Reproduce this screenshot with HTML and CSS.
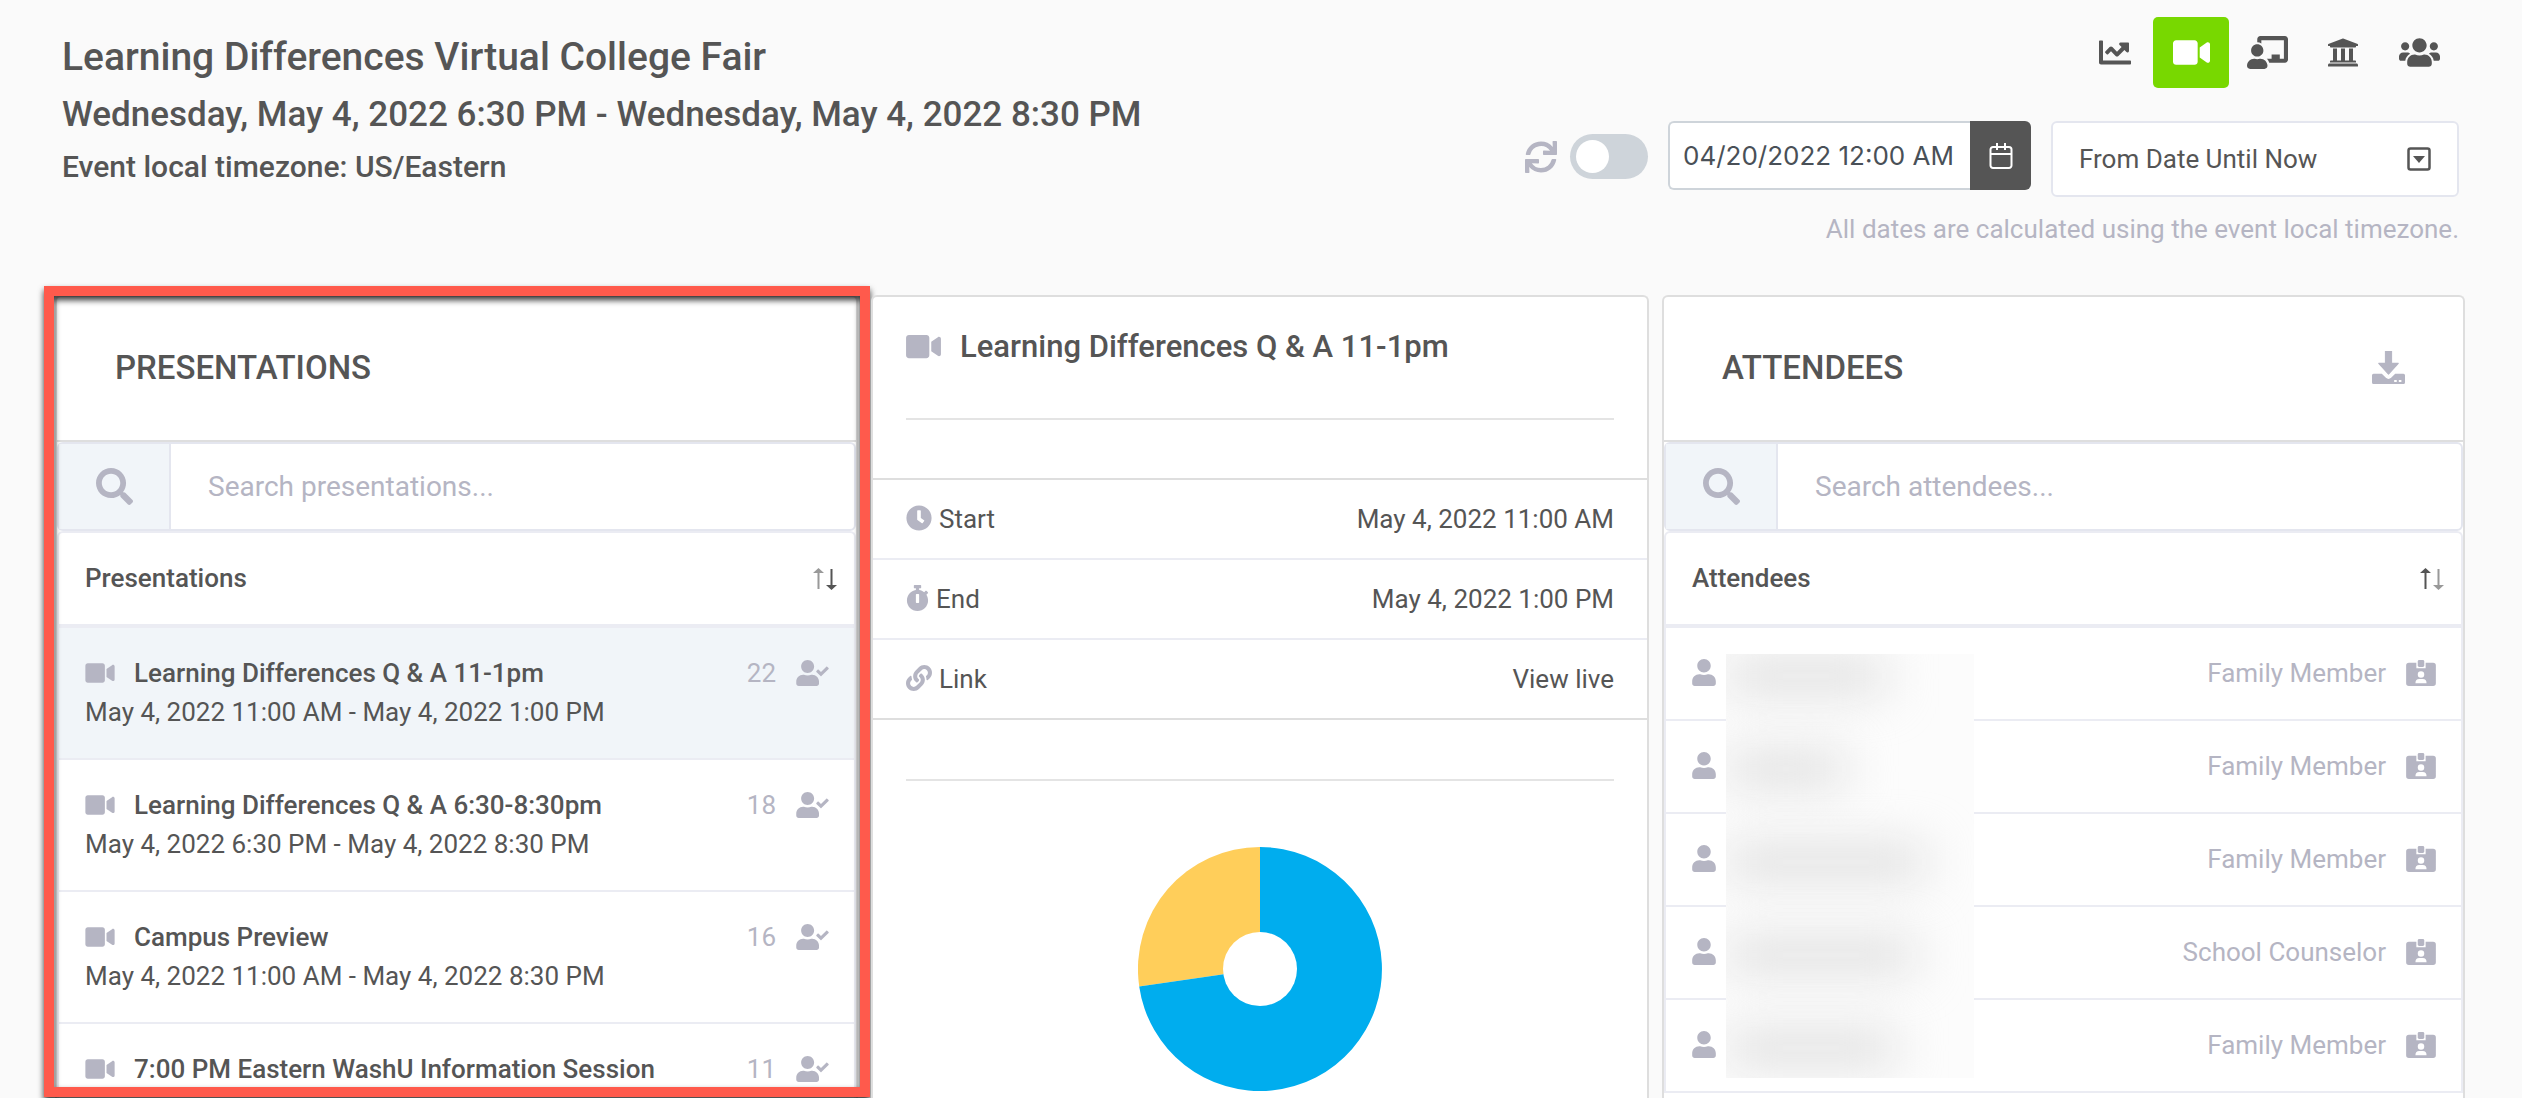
FILE: index.html
```html
<!DOCTYPE html>
<html lang="en">
<head>
    <meta charset="utf-8">
    <title>Learning Differences Virtual College Fair</title>
    <link rel="stylesheet" href="styles.css">
</head>
<body>
    <!-- icon sprites -->
    <svg class="sprites" width="0" height="0">
        <symbol id="i-chart" viewBox="0 0 512 512"><path d="M496 384H64V80c0-8.840-7.160-16-16-16H16C7.160 64 0 71.160 0 80v336c0 17.670 14.330 32 32 32h464c8.840 0 16-7.160 16-16v-32c0-8.840-7.160-16-16-16zM464 96H345.940c-21.380 0-32.090 25.850-16.970 40.970l32.400 32.400L288 242.750l-73.370-73.370c-12.500-12.500-32.760-12.500-45.250 0l-68.690 68.690c-6.250 6.250-6.250 16.380 0 22.630l22.620 22.620c6.250 6.250 16.380 6.250 22.630 0L192 237.250l73.370 73.370c12.500 12.500 32.760 12.500 45.250 0l96-96 32.400 32.400c15.120 15.120 40.970 4.410 40.970-16.970V112c.010-8.840-7.150-16-15.990-16z"/></symbol>
        <symbol id="i-video" viewBox="0 0 576 512"><path d="M336.200 64H47.800C21.400 64 0 85.400 0 111.800v288.400C0 426.600 21.400 448 47.800 448h288.400c26.400 0 47.800-21.400 47.800-47.800V111.800c0-26.400-21.400-47.800-47.800-47.800zm189.400 37.700L416 177.300v157.400l109.600 75.500c21.200 14.600 50.400-.3 50.400-25.800V127.500c0-25.400-29.100-40.400-50.400-25.800z"/></symbol>
        <symbol id="i-teacher" viewBox="0 0 640 512"><path d="M208 352c-2.390 0-4.780.350-7.060 1.090C187.980 357.300 174.350 360 160 360c-14.350 0-27.980-2.700-40.950-6.910-2.280-.740-4.660-1.090-7.050-1.090C49.940 352-.330 402.480 0 464.620.140 490.880 21.730 512 48 512h224c26.270 0 47.860-21.120 48-47.380.330-62.140-49.940-112.620-112-112.620zm-48-32c53.020 0 96-42.980 96-96s-42.980-96-96-96-96 42.980-96 96 42.980 96 96 96zM592 0H208c-26.470 0-48 22.250-48 49.590V96c23.420 0 45.100 6.780 64 17.800V64h352v288h-64v-64H384v64h-76.240c19.100 16.690 33.120 38.730 39.690 64H592c26.470 0 48-22.250 48-49.590V49.590C640 22.250 618.470 0 592 0z"/></symbol>
        <symbol id="i-bank" viewBox="0 0 512 512"><path d="M496 128v16a8 8 0 0 1-8 8h-24v12c0 6.627-5.373 12-12 12H60c-6.627 0-12-5.373-12-12v-12H24a8 8 0 0 1-8-8v-16a8 8 0 0 1 4.941-7.392l232-88a7.996 7.996 0 0 1 6.118 0l232 88A8 8 0 0 1 496 128zm-24 304H40c-13.255 0-24 10.745-24 24v16a8 8 0 0 0 8 8h464a8 8 0 0 0 8-8v-16c0-13.255-10.745-24-24-24zM96 192v192H60c-6.627 0-12 5.373-12 12v20h416v-20c0-6.627-5.373-12-12-12h-36V192h-64v192h-64V192h-64v192h-64V192H96z"/></symbol>
        <symbol id="i-users" viewBox="0 0 640 512"><path d="M96 224c35.300 0 64-28.700 64-64s-28.700-64-64-64-64 28.700-64 64 28.700 64 64 64zm448 0c35.300 0 64-28.700 64-64s-28.700-64-64-64-64 28.700-64 64 28.700 64 64 64zm32 32h-64c-17.600 0-33.500 7.100-45.100 18.600 40.300 22.100 68.900 62 75.100 109.400h66c17.700 0 32-14.300 32-32v-32c0-35.300-28.700-64-64-64zm-256 0c61.900 0 112-50.100 112-112S381.900 32 320 32 208 82.100 208 144s50.100 112 112 112zm76.800 32h-8.300c-20.800 10-43.900 16-68.500 16s-47.600-6-68.500-16h-8.300C179.600 288 128 339.600 128 403.200V432c0 26.500 21.500 48 48 48h288c26.500 0 48-21.500 48-48v-28.800c0-63.600-51.600-115.200-115.200-115.200zm-223.700-13.400C161.500 263.100 145.600 256 128 256H64c-35.300 0-64 28.700-64 64v32c0 17.700 14.300 32 32 32h65.900c6.300-47.400 34.900-87.300 75.200-109.400z"/></symbol>
        <symbol id="i-sync" viewBox="0 0 512 512"><path d="M440.650 12.570l4 82.770A247.160 247.160 0 0 0 255.830 8C134.730 8 33.910 94.920 12.290 209.820A12 12 0 0 0 24.090 224h49.050a12 12 0 0 0 11.670-9.260 175.910 175.910 0 0 1 317-56.940l-101.460-4.860a12 12 0 0 0-12.570 12v47.410a12 12 0 0 0 12 12H500a12 12 0 0 0 12-12V12a12 12 0 0 0-12-12h-47.370a12 12 0 0 0-11.980 12.570zM255.830 432a175.610 175.610 0 0 1-146-77.800l101.800 4.870a12 12 0 0 0 12.570-12v-47.400a12 12 0 0 0-12-12H12a12 12 0 0 0-12 12V500a12 12 0 0 0 12 12h47.350a12 12 0 0 0 12-12.600l-4.150-82.570A247.170 247.170 0 0 0 255.830 504c121.110 0 221.930-86.920 243.550-201.820a12 12 0 0 0-11.800-14.180h-49.050a12 12 0 0 0-11.670 9.260A175.860 175.860 0 0 1 255.830 432z"/></symbol>
        <symbol id="i-search" viewBox="0 0 512 512"><path d="M505 442.700L405.300 343c-4.500-4.500-10.600-7-17-7H372c27.600-35.300 44-79.700 44-128C416 93.100 322.900 0 208 0S0 93.100 0 208s93.100 208 208 208c48.300 0 92.700-16.400 128-44v16.300c0 6.400 2.500 12.500 7 17l99.700 99.700c9.400 9.400 24.600 9.400 33.900 0l28.300-28.300c9.400-9.400 9.400-24.600.1-34zM208 336c-70.700 0-128-57.200-128-128 0-70.700 57.200-128 128-128 70.700 0 128 57.200 128 128 0 70.700-57.200 128-128 128z"/></symbol>
        <symbol id="i-user" viewBox="0 0 448 512"><path d="M224 256c70.700 0 128-57.300 128-128S294.700 0 224 0 96 57.300 96 128s57.300 128 128 128zm89.600 32h-16.700c-22.200 10.200-46.900 16-72.900 16s-50.600-5.800-72.900-16h-16.700C60.200 288 0 348.200 0 422.400V464c0 26.500 21.500 48 48 48h352c26.500 0 48-21.500 48-48v-41.600c0-74.200-60.200-134.400-134.400-134.400z"/></symbol>
        <symbol id="i-user-check" viewBox="0 0 640 512"><path d="M224 256c70.700 0 128-57.300 128-128S294.700 0 224 0 96 57.300 96 128s57.300 128 128 128zm89.600 32h-16.700c-22.200 10.200-46.900 16-72.900 16s-50.600-5.800-72.900-16h-16.700C60.200 288 0 348.200 0 422.400V464c0 26.500 21.500 48 48 48h352c26.500 0 48-21.500 48-48v-41.600c0-74.200-60.200-134.400-134.400-134.400zm323-128.400l-27.800-28.100c-4.600-4.700-12.100-4.700-16.800-.1l-104.800 104-45.500-45.800c-4.600-4.700-12.100-4.700-16.800-.1l-28.100 27.900c-4.700 4.600-4.700 12.100-.1 16.800l81.700 82.300c4.600 4.700 12.100 4.700 16.800.1l141.300-140.200c4.600-4.700 4.700-12.200.1-16.800z"/></symbol>
        <symbol id="i-clock" viewBox="0 0 512 512"><path d="M256 8C119 8 8 119 8 256s111 248 248 248 248-111 248-248S393 8 256 8zm57.100 350.100L224.900 294c-3.100-2.300-4.900-5.900-4.900-9.700V116c0-6.600 5.400-12 12-12h48c6.600 0 12 5.400 12 12v137.700l63.500 46.200c5.400 3.900 6.500 11.400 2.600 16.800l-28.200 38.800c-3.900 5.300-11.400 6.500-16.800 2.600z"/></symbol>
        <symbol id="i-stopwatch" viewBox="0 0 448 512"><path d="M432 304c0 114.900-93.100 208-208 208S16 418.900 16 304c0-104 76.300-190.200 176-205.500V64h-28c-6.600 0-12-5.400-12-12V12c0-6.600 5.400-12 12-12h120c6.600 0 12 5.400 12 12v40c0 6.600-5.400 12-12 12h-28v34.500c37.500 5.800 71.700 21.600 99.700 44.600l27.500-27.500c4.700-4.700 12.300-4.700 17 0l28.300 28.300c4.700 4.700 4.700 12.300 0 17l-29.400 29.400-.6.600C419.700 223.300 432 262.200 432 304zm-176 36V188.500c0-6.600-5.400-12-12-12h-40c-6.600 0-12 5.400-12 12V340c0 6.600 5.400 12 12 12h40c6.600 0 12-5.400 12-12z"/></symbol>
        <symbol id="i-link" viewBox="0 0 512 512"><path d="M326.612 185.391c59.747 59.809 58.927 155.698.360 214.590-.110.120-.240.250-.360.370l-67.200 67.200c-59.270 59.270-155.699 59.262-214.960 0-59.270-59.260-59.270-155.700 0-214.960l37.106-37.106c9.840-9.840 26.786-3.300 27.294 10.606.648 17.722 3.826 35.527 9.690 52.721 1.986 5.822.567 12.262-3.783 16.612l-13.087 13.087c-28.026 28.026-28.905 73.660-1.155 101.960 28.024 28.579 74.086 28.749 102.325.510l67.200-67.190c28.191-28.191 28.073-73.757 0-101.830-3.701-3.694-7.429-6.564-10.341-8.569a16.037 16.037 0 0 1-6.947-12.606c-.396-10.567 3.348-21.456 11.698-29.806l21.054-21.055c5.521-5.521 14.182-6.199 20.584-1.731a152.482 152.482 0 0 1 20.522 17.197zM467.547 44.449c-59.261-59.262-155.690-59.270-214.960 0l-67.200 67.200c-.120.120-.250.250-.360.370-58.566 58.892-59.387 154.781.360 214.590a152.454 152.454 0 0 0 20.521 17.196c6.402 4.468 15.064 3.789 20.584-1.731l21.054-21.055c8.350-8.350 12.094-19.239 11.698-29.806a16.037 16.037 0 0 0-6.947-12.606c-2.912-2.005-6.640-4.875-10.341-8.569-28.073-28.073-28.191-73.639 0-101.830l67.200-67.190c28.239-28.239 74.300-28.069 102.325.510 27.750 28.300 26.872 73.934-1.155 101.960l-13.087 13.087c-4.350 4.350-5.769 10.790-3.783 16.612 5.864 17.194 9.042 34.999 9.690 52.721.509 13.906 17.454 20.446 27.294 10.606l37.106-37.106c59.271-59.259 59.271-155.699.001-214.959z"/></symbol>
        <symbol id="i-download" viewBox="0 0 32 32"><path d="M13 0h6v12h6.500L16 22.500 6.500 12H13z" stroke="currentColor" stroke-linejoin="round"/><path d="M1.500 22h8l4 4c1.500 1.400 3.500 1.400 5 0l4-4h8a1.500 1.500 0 0 1 1.500 1.500v7a1.500 1.500 0 0 1-1.500 1.500h-29A1.500 1.500 0 0 1 0 30.500v-7A1.500 1.500 0 0 1 1.500 22z"/><path d="M21.500 28h2.500v2h-2.500zm4.500 0h2.500v2H26z" fill="#fff"/></symbol>
        <symbol id="i-badge" viewBox="0 0 32 28"><path fill-rule="evenodd" d="M3 3h8v6h10V3h8a3 3 0 0 1 3 3v19a3 3 0 0 1-3 3H3a3 3 0 0 1-3-3V6a3 3 0 0 1 3-3zm13 9a3.500 3.500 0 1 0 0 7 3.500 3.500 0 0 0 0-7zm-6 13h12c0-3-1.500-4.500-4-4.500h-4c-2.500 0-4 1.500-4 4.500z"/><rect x="12.500" width="7" height="7.500" rx="1.500"/></symbol>
        <symbol id="i-calendar" viewBox="0 0 24 28"><path d="M4 5h16a2.500 2.500 0 0 1 2.500 2.500v16A2.500 2.500 0 0 1 20 26H4a2.500 2.500 0 0 1-2.500-2.500v-16A2.500 2.500 0 0 1 4 5zM2 12h20M8 1v7M16 1v7" fill="none" stroke="currentColor" stroke-width="2"/></symbol>
        <symbol id="i-sort" viewBox="0 0 24 22"><path class="up" d="M4.500 21V5H0L5.500 0 11 5H6.500v16z"/><path class="down" d="M17.500 1v16H13l5.500 5 5.500-5h-4.500V1z"/></symbol>
    </svg>

    <header class="top">
        <div class="event">
            <h1>Learning Differences Virtual College Fair</h1>
            <h2>Wednesday, May 4, 2022 6:30 PM - Wednesday, May 4, 2022 8:30 PM</h2>
            <h3>Event local timezone: US/Eastern</h3>
        </div>
        <div class="tools">
            <nav class="tabs">
                <button aria-label="Statistics"><svg class="w32"><use href="#i-chart"/></svg></button>
                <button class="active" aria-label="Presentations"><svg class="w37"><use href="#i-video"/></svg></button>
                <button aria-label="Booths"><svg class="w41"><use href="#i-teacher"/></svg></button>
                <button aria-label="Colleges"><svg class="w32"><use href="#i-bank"/></svg></button>
                <button aria-label="Attendees"><svg class="w41"><use href="#i-users"/></svg></button>
            </nav>
            <div class="filters">
                <div class="refresh">
                    <svg class="sync"><use href="#i-sync"/></svg>
                    <input type="checkbox" class="switch" aria-label="Auto refresh">
                </div>
                <div class="date">
                    <input type="text" value="04/20/2022 12:00 AM" aria-label="From date">
                    <button aria-label="Open calendar"><svg><use href="#i-calendar"/></svg></button>
                </div>
                <select class="range" aria-label="Date range">
                    <option>From Date Until Now</option>
                </select>
            </div>
            <p class="hint">All dates are calculated using the event local timezone.</p>
        </div>
    </header>

    <main class="columns">
        <section class="card">
            <div class="card-head">
                <h4>PRESENTATIONS</h4>
            </div>
            <div class="search">
                <span class="search-icon"><svg><use href="#i-search"/></svg></span>
                <input type="text" placeholder="Search presentations..." aria-label="Search presentations">
            </div>
            <div class="rows">
                <table class="list">
                    <thead>
                        <tr><th>Presentations</th><th class="sort desc"><button aria-label="Sort"><svg><use href="#i-sort"/></svg></button></th></tr>
                    </thead>
                    <tbody>
                        <tr class="selected">
                            <td><div class="name"><svg><use href="#i-video"/></svg>Learning Differences Q &amp; A 11-1pm</div>May 4, 2022 11:00 AM - May 4, 2022 1:00 PM</td>
                            <td class="count"><div>22<svg><use href="#i-user-check"/></svg></div></td>
                        </tr>
                        <tr>
                            <td><div class="name"><svg><use href="#i-video"/></svg>Learning Differences Q &amp; A 6:30-8:30pm</div>May 4, 2022 6:30 PM - May 4, 2022 8:30 PM</td>
                            <td class="count"><div>18<svg><use href="#i-user-check"/></svg></div></td>
                        </tr>
                        <tr>
                            <td><div class="name"><svg><use href="#i-video"/></svg>Campus Preview</div>May 4, 2022 11:00 AM - May 4, 2022 8:30 PM</td>
                            <td class="count"><div>16<svg><use href="#i-user-check"/></svg></div></td>
                        </tr>
                        <tr>
                            <td><div class="name"><svg><use href="#i-video"/></svg>7:00 PM Eastern WashU Information Session</div></td>
                            <td class="count"><div>11<svg><use href="#i-user-check"/></svg></div></td>
                        </tr>
                    </tbody>
                </table>
            </div>
            <div class="highlight"></div>
        </section>

        <section class="card">
            <div class="detail-head">
                <h5><svg><use href="#i-video"/></svg>Learning Differences Q &amp; A 11-1pm</h5>
                <hr>
            </div>
            <dl class="facts">
                <div><dt><svg><use href="#i-clock"/></svg>Start</dt><dd>May 4, 2022 11:00 AM</dd></div>
                <div><dt><svg class="narrow"><use href="#i-stopwatch"/></svg>End</dt><dd>May 4, 2022 1:00 PM</dd></div>
                <div><dt><svg><use href="#i-link"/></svg>Link</dt><dd><a href="#">View live</a></dd></div>
            </dl>
            <div class="chart">
                <hr>
                <svg class="donut" viewBox="-122 -122 244 244">
                    <path fill="#ffce5a" d="M0 0V-122A122 122 0 0 0 -120.800 17.400z"/>
                    <path fill="#00adee" d="M0 0V-122A122 122 0 1 1 -120.800 17.400z"/>
                    <circle r="37" fill="#fff"/>
                </svg>
            </div>
        </section>

        <section class="card">
            <div class="card-head">
                <h4>ATTENDEES</h4>
                <button aria-label="Download attendees"><svg><use href="#i-download"/></svg></button>
            </div>
            <div class="search">
                <span class="search-icon"><svg><use href="#i-search"/></svg></span>
                <input type="text" placeholder="Search attendees..." aria-label="Search attendees">
            </div>
            <div class="rows people">
                <table class="list">
                    <thead>
                        <tr><th>Attendees</th><th class="sort asc"><button aria-label="Sort"><svg><use href="#i-sort"/></svg></button></th></tr>
                    </thead>
                    <tbody>
                        <tr><td><svg class="person"><use href="#i-user"/></svg></td><td class="role"><div>Family Member<svg><use href="#i-badge"/></svg></div></td></tr>
                        <tr><td><svg class="person"><use href="#i-user"/></svg></td><td class="role"><div>Family Member<svg><use href="#i-badge"/></svg></div></td></tr>
                        <tr><td><svg class="person"><use href="#i-user"/></svg></td><td class="role"><div>Family Member<svg><use href="#i-badge"/></svg></div></td></tr>
                        <tr><td><svg class="person"><use href="#i-user"/></svg></td><td class="role"><div>School Counselor<svg><use href="#i-badge"/></svg></div></td></tr>
                        <tr><td><svg class="person"><use href="#i-user"/></svg></td><td class="role"><div>Family Member<svg><use href="#i-badge"/></svg></div></td></tr>
                    </tbody>
                </table>
                <!-- names are hidden -->
                <div class="redacted">
                    <span style="width: 160px"></span>
                    <span style="width: 120px"></span>
                    <span style="width: 200px"></span>
                    <span style="width: 190px"></span>
                    <span style="width: 170px"></span>
                </div>
            </div>
        </section>
    </main>
</body>
</html>
```
FILE: styles.css
```css
* {
    box-sizing: border-box;
}
body {
    margin: 0;
    height: 100vh;
    overflow: hidden;
    display: flex;
    flex-direction: column;
    background: #fafafa;
    color: #555;
    font-family: Roboto, "Liberation Sans", sans-serif;
    font-size: 26px;
    line-height: 39px;
}
h1, h2, h3, h4, h5, p, dl, dd {
    margin: 0;
}
h1, h2, h3, h4, h5 {
    font-weight: 500;
}
button, input, select {
    font: inherit;
    color: inherit;
}
button {
    border: 0;
    padding: 0;
    background: none;
}
svg {
    fill: currentColor;
    flex: none;
}
.sprites {
    position: absolute;
}

/* header */
.top {
    display: flex;
    justify-content: space-between;
    height: 295px;
    flex: none;
    padding: 17px 63px 0 62px;
}
.event {
    padding-top: 10px;
}
h1 {
    font-size: 39px;
    line-height: 60px;
}
h2 {
    font-size: 35px;
    line-height: 56px;
}
h3 {
    font-size: 30px;
    line-height: 48px;
}
.tools {
    display: flex;
    flex-direction: column;
    align-items: flex-end;
}
.tabs {
    display: flex;
    padding-right: 2px;
}
.tabs button {
    display: flex;
    align-items: center;
    justify-content: center;
    width: 76px;
    height: 71px;
    border-radius: 5px;
}
.tabs .active {
    background: #78d800;
    color: #fff;
}
.tabs svg {
    height: 33px;
}
.w32 {
    width: 32px;
}
.w37 {
    width: 37px;
}
.w41 {
    width: 41px;
}
.filters {
    display: flex;
    gap: 20px;
    margin-top: 33px;
}
.refresh {
    display: flex;
    align-items: center;
    gap: 13px;
    height: 71px;
}
.sync {
    width: 32px;
    height: 32px;
    color: #b5b5c3;
}
.switch {
    appearance: none;
    display: flex;
    align-items: center;
    width: 78px;
    height: 45px;
    margin: 0;
    padding: 0 6px;
    border-radius: 23px;
    background: #ced4da;
}
.switch::before {
    content: "";
    width: 33px;
    height: 33px;
    border-radius: 50%;
    background: #fff;
}
.date {
    display: flex;
    width: 363px;
    height: 69px;
}
.date input {
    flex: 1;
    min-width: 0;
    padding: 0 13px;
    border: 2px solid #ced4da;
    border-right: 0;
    border-radius: 6px 0 0 6px;
    background: #fff;
    color: #495057;
    font-family: Inter, sans-serif;
}
.date button {
    display: flex;
    align-items: center;
    justify-content: center;
    width: 61px;
    border-radius: 0 6px 6px 0;
    background: #555;
    color: #fff;
}
.date svg {
    width: 24px;
    height: 28px;
}
.range {
    appearance: none;
    width: 408px;
    height: 76px;
    padding: 0 26px;
    border: 2px solid #e4e6ef;
    border-radius: 6px;
    background: #fff url("data:image/svg+xml,%3Csvg xmlns='http://www.w3.org/2000/svg' width='24' height='24' viewBox='0 0 24 24'%3E%3Crect x='1.500' y='1.500' width='21' height='21' rx='2' fill='none' stroke='%23555' stroke-width='2.500'/%3E%3Cpath d='M6 9h12l-6 7z' fill='%23555'/%3E%3C/svg%3E") no-repeat right 26px center;
}
.hint {
    margin-top: 13px;
    color: #b5b5c3;
}

/* columns */
.columns {
    flex: 1;
    min-height: 0;
    display: grid;
    grid-template-columns: 803fr 778fr 803fr;
    grid-template-rows: minmax(0, 1fr);
    gap: 13px;
    padding: 0 57px 0 55px;
}
.card {
    position: relative;
    display: flex;
    flex-direction: column;
    min-width: 0;
    border: 2px solid #dedede;
    border-bottom: 0;
    border-radius: 6px 6px 0 0;
    background: #fff;
}
.card-head {
    display: flex;
    align-items: center;
    justify-content: space-between;
    flex: none;
    height: 145px;
    padding: 0 58px 2px;
    border-bottom: 2px solid #dedede;
}
h4 {
    font-size: 33px;
}
.card-head button {
    display: flex;
    color: #b5b5c3;
}
.card-head button svg {
    width: 33px;
    height: 33px;
}
.search {
    display: flex;
    flex: none;
    height: 89px;
    border: 2px solid #e4e6ef;
    border-radius: 6px;
}
.search-icon {
    display: flex;
    align-items: center;
    justify-content: center;
    width: 112px;
    border-right: 2px solid #e4e6ef;
    background: #f1f5f9;
    color: #b5b5c3;
}
.search-icon svg {
    width: 37px;
    height: 37px;
}
.search input {
    flex: 1;
    min-width: 0;
    padding: 0 37px;
    border: 0;
    background: none;
    font-size: 28px;
}
.search input::placeholder {
    color: #b5b5c3;
    opacity: 1;
}
.rows {
    position: relative;
    flex: 1;
    min-height: 0;
    overflow: hidden;
}
.list {
    width: 100%;
    border-collapse: separate;
    border-spacing: 0;
    border: 2px solid #ebecf3;
    border-bottom: 0;
    border-radius: 6px 6px 0 0;
}
.list th {
    height: 95px;
    padding: 0 26px;
    border-bottom: 4px solid #ebecf3;
    text-align: left;
    font-weight: 500;
}
.list .sort {
    padding: 0 17px 0 0;
}
.sort button {
    display: block;
    margin-left: auto;
}
.sort svg {
    display: block;
    width: 24px;
    height: 22px;
}
.asc {
    --down: 0.6;
}
.desc {
    --up: 0.6;
}
.up {
    opacity: var(--up, 1);
}
.down {
    opacity: var(--down, 1);
}
.list td {
    height: 132px;
    padding: 26px 25px 0 26px;
    border-bottom: 2px solid #ebecf3;
    vertical-align: top;
}
.list .selected td {
    background: #f1f5f9;
}
.name {
    display: flex;
    align-items: center;
    gap: 19px;
    font-weight: 500;
}
.name svg {
    width: 30px;
    height: 26px;
    margin-bottom: 2px;
    color: #b5b5c3;
}
.count div, .role div {
    display: flex;
    align-items: center;
    justify-content: flex-end;
    gap: 20px;
    color: #b5b5c3;
}
.count svg, .role svg {
    width: 33px;
    height: 26px;
    margin-bottom: 2px;
}
.role svg {
    width: 30px;
}

/* callout frame round the first card */
.highlight {
    position: absolute;
    top: -11px;
    right: -14px;
    bottom: 1px;
    left: -13px;
    border: 10px solid #ff5a4c;
    filter: drop-shadow(0 4px 3px rgba(0, 0, 0, 0.8));
    pointer-events: none;
}

/* presentation details */
.detail-head {
    height: 183px;
    padding: 30px 33px 0;
    border-bottom: 2px solid #dedede;
}
h5 {
    display: flex;
    align-items: center;
    gap: 19px;
    font-size: 31px;
    line-height: 40px;
}
h5 svg {
    width: 35px;
    height: 31px;
    margin-bottom: 2px;
    color: #b5b5c3;
}
hr {
    width: 100%;
    margin: 51px 0 0;
    border: 0;
    border-top: 2px solid #e4e4e4;
}
.facts div {
    display: flex;
    align-items: center;
    justify-content: space-between;
    height: 80px;
    padding: 0 33px;
    border-bottom: 2px solid #ebecf3;
}
.facts div:last-child {
    border-color: #dedede;
}
.facts dt {
    display: flex;
    align-items: center;
    gap: 7px;
}
.facts svg {
    width: 26px;
    height: 26px;
    margin-bottom: 2px;
    color: #b5b5c3;
}
.facts .narrow {
    width: 23px;
}
.facts a {
    color: inherit;
    text-decoration: none;
}
.chart {
    display: flex;
    flex-direction: column;
    align-items: center;
    gap: 66px;
    padding: 8px 33px 0;
}
.donut {
    width: 244px;
    height: 244px;
}

/* attendees */
.people td {
    height: 93px;
}
.person {
    display: block;
    width: 24px;
    height: 27px;
    margin-top: 5px;
    color: #b5b5c3;
}
.redacted {
    position: absolute;
    top: 123px;
    left: 62px;
    width: 248px;
    height: 424px;
    overflow: hidden;
    display: flex;
    flex-direction: column;
    gap: 61px;
    padding-top: 6px;
    background: #fcfcfc;
}
.redacted span {
    flex: none;
    height: 32px;
    background: #dcdcdc;
    filter: blur(24px);
}
```
